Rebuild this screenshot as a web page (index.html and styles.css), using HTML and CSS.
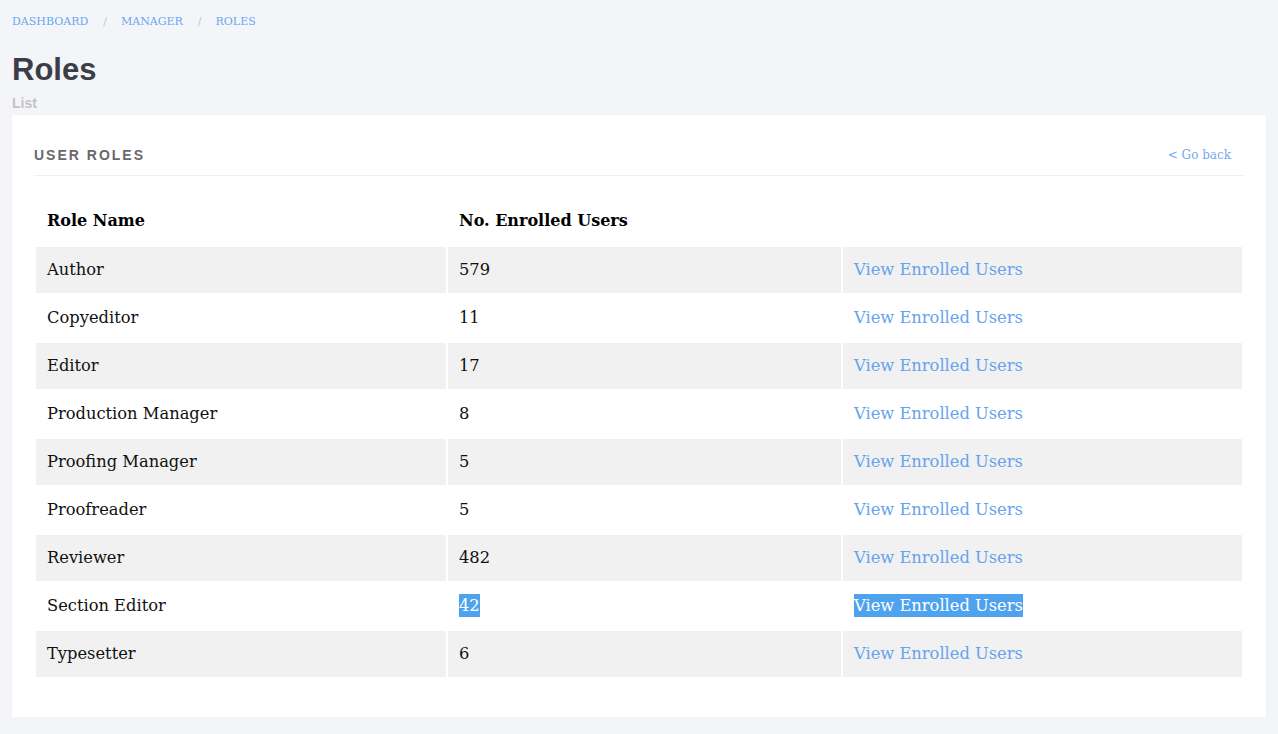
FILE: index.html
```html
<!DOCTYPE html>
<html lang="en">
<head>
<meta charset="utf-8">
<title>Roles</title>
<link rel="stylesheet" href="styles.css">
</head>
<body>
<nav class="crumbs">
  <a href="#">Dashboard</a><span class="sep">/</span><a href="#">Manager</a><span class="sep">/</span><a href="#">Roles</a>
</nav>
<h1 class="title">Roles</h1>
<div class="subtitle">List</div>
<section class="card">
  <header class="card-head">
    <h2 class="card-title">User Roles</h2>
    <a class="back" href="#">&lt; Go back</a>
  </header>
  <table class="roles">
    <colgroup><col class="c1"><col class="c2"><col class="c3"></colgroup>
    <thead>
      <tr><th>Role Name</th><th>No. Enrolled Users</th><th></th></tr>
    </thead>
    <tbody>
      <tr><td>Author</td><td>579</td><td><a href="#">View Enrolled Users</a></td></tr>
      <tr><td>Copyeditor</td><td>11</td><td><a href="#">View Enrolled Users</a></td></tr>
      <tr><td>Editor</td><td>17</td><td><a href="#">View Enrolled Users</a></td></tr>
      <tr><td>Production Manager</td><td>8</td><td><a href="#">View Enrolled Users</a></td></tr>
      <tr><td>Proofing Manager</td><td>5</td><td><a href="#">View Enrolled Users</a></td></tr>
      <tr><td>Proofreader</td><td>5</td><td><a href="#">View Enrolled Users</a></td></tr>
      <tr><td>Reviewer</td><td>482</td><td><a href="#">View Enrolled Users</a></td></tr>
      <tr><td>Section Editor</td><td><span class="sel">42</span></td><td><a href="#" class="sel">View Enrolled Users</a></td></tr>
      <tr><td>Typesetter</td><td>6</td><td><a href="#">View Enrolled Users</a></td></tr>
    </tbody>
  </table>
</section>
</body>
</html>
```
FILE: styles.css
```css
html, body {
  margin: 0;
  padding: 0;
}
body {
  background: #f4f5f9;
  padding: 14px 12px 0;
  font-family: "DejaVu Serif", "Liberation Serif", serif;
  color: #111;
}
a {
  text-decoration: none;
  color: #66a3ee;
}
.crumbs {
  font-size: 11px;
  line-height: 16px;
  text-transform: uppercase;
}
.crumbs a {
  color: #6aa7ef;
}
.sep {
  color: #c5c5c5;
  margin: 0 14px 0 15px;
}
.title {
  font-family: "Liberation Sans", Arial, sans-serif;
  font-weight: bold;
  font-size: 31px;
  line-height: 34px;
  color: #3b3d48;
  margin: 23px 0 0;
}
.subtitle {
  font-family: "Liberation Sans", Arial, sans-serif;
  font-weight: bold;
  font-size: 14px;
  line-height: 16px;
  color: #c3c3c6;
  margin-top: 8px;
}
.card {
  background: #fff;
  margin-top: 4px;
  padding: 31px 22px 38px;
  box-shadow: 0 0 2px rgba(0, 0, 0, 0.04);
}
.card-head {
  display: flex;
  justify-content: space-between;
  align-items: center;
  border-bottom: 1px solid #eeeff2;
  padding-bottom: 11px;
}
.card-title {
  margin: 0;
  font-family: "Liberation Sans", Arial, sans-serif;
  font-weight: bold;
  font-size: 14px;
  line-height: 18px;
  letter-spacing: 2px;
  text-transform: uppercase;
  color: #68686d;
}
.back {
  font-size: 12px;
  line-height: 18px;
  padding-right: 13px;
  color: #75abef;
}
.roles {
  width: 100%;
  table-layout: fixed;
  border-collapse: separate;
  border-spacing: 2px;
  margin-top: 21px;
  font-size: 16.3px;
}
.c1 { width: 410px; }
.c2 { width: 393px; }
.roles th, .roles td {
  height: 46px;
  padding: 0 11px 2px;
  text-align: left;
  vertical-align: middle;
  box-sizing: border-box;
}
.roles th {
  font-weight: bold;
  color: #000;
  font-size: 16px;
  padding-bottom: 3px;
}
.roles tbody tr:nth-child(odd) td {
  background: #f1f1f1;
}
.roles td a {
  color: #66a3ee;
}
.sel {
  background: #4fa3ee;
  color: #fff !important;
  padding: 2px 0;
}
```
